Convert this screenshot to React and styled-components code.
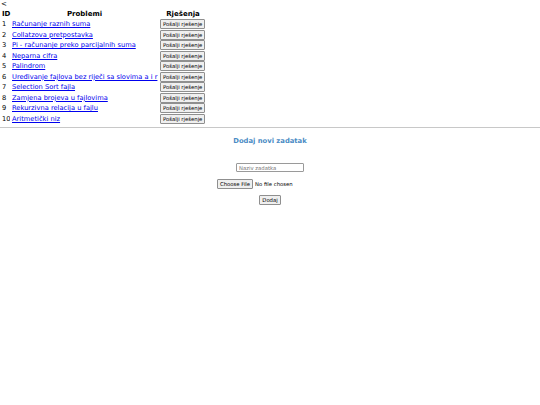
import React from "react";
import styled, { createGlobalStyle } from "styled-components";

const Global = createGlobalStyle`
  html, body { margin: 0; padding: 0; background: #fff; }
  body { font-family: "DejaVu Sans", sans-serif; color: #000; }
`;

const Back = styled.div`
  font-size: 7px;
  line-height: 8px;
  padding-left: 1px;
  height: 8px;
`;

const Table = styled.table`
  border-collapse: separate;
  border-spacing: 1px 0;
  table-layout: fixed;
  width: 207px;
  font-size: 6.7px;
`;

const Th = styled.th`
  font-weight: bold;
  font-size: 7px;
  text-align: ${(p) => p.$align || "center"};
  height: 11px;
  padding: 0 1px;
  white-space: nowrap;
`;

const Td = styled.td`
  height: 10.5px;
  padding: 0 1px;
  white-space: nowrap;
  overflow: hidden;
  vertical-align: middle;
`;

const Link = styled.a`
  color: #0000ee;
  text-decoration: underline;
`;

const SmallButton = styled.button`
  font-family: "DejaVu Sans", sans-serif;
  font-size: 5.3px;
  line-height: 6px;
  padding: 1px 2px;
  margin: ${(p) => p.$margin || "0"};
  background: #efefef;
  border: 1px solid #8f8f8f;
  border-radius: 1px;
  color: #000;
  white-space: nowrap;
`;

const Rule = styled.hr`
  margin: 3px 0 0;
  border: none;
  border-top: 1px solid #c8c8c8;
  height: 1px;
`;

const Form = styled.div`
  display: flex;
  flex-direction: column;
  align-items: center;
`;

const Heading = styled.h3`
  margin: 8px 0 0;
  font-size: 6.8px;
  font-weight: bold;
  color: #4a8bc4;
`;

const TextInput = styled.input`
  margin-top: 18px;
  width: 62px;
  height: 7px;
  font-size: 5.3px;
  padding: 0 2px;
  border: 1px solid #9a9a9a;
  border-radius: 1px;
  font-family: "DejaVu Sans", sans-serif;
  &::placeholder { color: #777; }
`;

const FileRow = styled.div`
  margin-top: 7px;
  width: 106px;
  display: flex;
  align-items: center;
  gap: 2px;
  font-size: 5.3px;
`;

const Status = styled.span`
  font-family: "DejaVu Sans", sans-serif;
`;

const problems = [
  "Računanje raznih suma",
  "Collatzova pretpostavka",
  "Pi - računanje preko parcijalnih suma",
  "Neparna cifra",
  "Palindrom",
  "Uređivanje fajlova bez riječi sa slovima a i r",
  "Selection Sort fajla",
  "Zamjena brojeva u fajlovima",
  "Rekurzivna relacija u fajlu",
  "Aritmetički niz",
];

export default function App() {
  return (
    <>
      <Global />
      <Back>&lt;</Back>
      <Table>
        <colgroup>
          <col style={{ width: "9px" }} />
          <col style={{ width: "147px" }} />
          <col style={{ width: "48px" }} />
        </colgroup>
        <thead>
          <tr>
            <Th $align="left">ID</Th>
            <Th>Problemi</Th>
            <Th>Rješenja</Th>
          </tr>
        </thead>
        <tbody>
          {problems.map((p, i) => (
            <tr key={i}>
              <Td>{i + 1}</Td>
              <Td>
                <Link href="#">{p}</Link>
              </Td>
              <Td>
                <SmallButton>Pošalji rješenje</SmallButton>
              </Td>
            </tr>
          ))}
        </tbody>
      </Table>
      <Rule />
      <Form>
        <Heading>Dodaj novi zadatak</Heading>
        <TextInput placeholder="Naziv zadatka" />
        <FileRow>
          <SmallButton>Choose File</SmallButton>
          <Status>No file chosen</Status>
        </FileRow>
        <SmallButton $margin="6px 0 0">Dodaj</SmallButton>
      </Form>
    </>
  );
}
